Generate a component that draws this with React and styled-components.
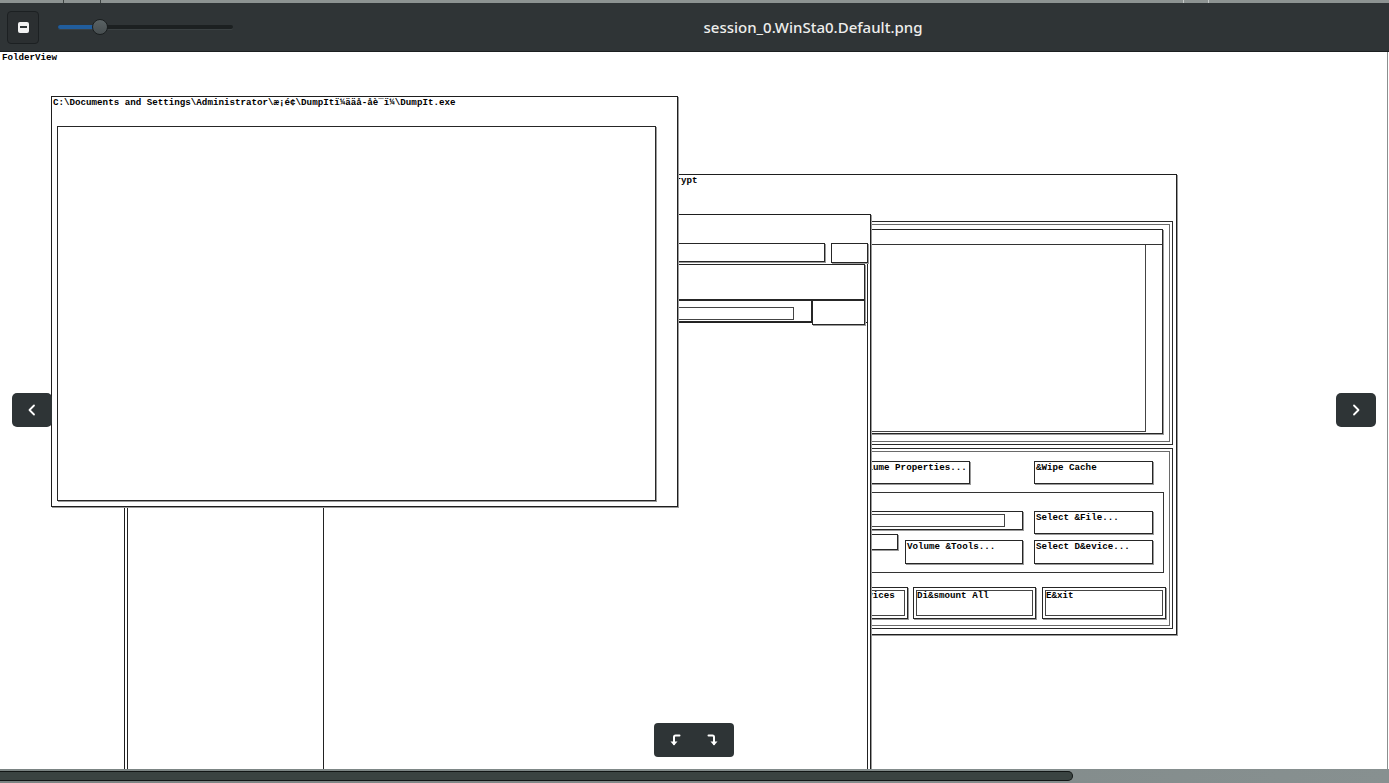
import React from "react";
import styled, { createGlobalStyle, css } from "styled-components";

const GlobalStyle = createGlobalStyle`
  html, body {
    margin: 0;
    padding: 0;
    background: #fff;
    overflow: hidden;
  }
  * { box-sizing: border-box; }
  #root { width: 1389px; height: 783px; }
`;

const mono = css`
  font-family: "Liberation Mono", "DejaVu Sans Mono", monospace;
  font-size: 9.2px;
  font-weight: 700;
  line-height: 10px;
  color: #000;
  white-space: nowrap;
`;

const DUMPIT_PATH =
  "C:\\Documents and Settings\\Administrator\\æ¡é¢\\DumpItï¼ääå-åè¯ï¼\\DumpIt.exe";

const Viewer = styled.div`
  width: 1389px;
  height: 783px;
  display: flex;
  flex-direction: column;
  overflow: hidden;
`;

const TopStrip = styled.div`
  height: 3px;
  flex: none;
  background: linear-gradient(
      to right,
      transparent 63px,
      #3e4443 63px,
      #3e4443 64px,
      transparent 64px,
      transparent 100px,
      #3e4443 100px,
      #3e4443 101px,
      transparent 101px,
      transparent 1183px,
      #c4c8c7 1183px,
      #c4c8c7 1184px,
      transparent 1184px,
      transparent 1208px,
      #c4c8c7 1208px,
      #c4c8c7 1209px,
      transparent 1209px
    ),
    #8d9392;
`;

const HeaderBar = styled.header`
  height: 49px;
  flex: none;
  display: flex;
  align-items: center;
  padding-left: 7px;
  background: #2f3436;
  border-bottom: 1px solid #1b1f20;
`;

const ZoomButton = styled.div`
  width: 32px;
  height: 33px;
  border: 1px solid #1c2022;
  border-radius: 4px;
  background: #2b2f31;
  display: flex;
  align-items: center;
  justify-content: center;
`;

const MinusGlyph = styled.span`
  width: 11px;
  height: 11px;
  border-radius: 2px;
  background: #f2f2f2;
  display: flex;
  align-items: center;
  justify-content: center;
  &::after {
    content: "";
    width: 7px;
    height: 2px;
    background: #2f3436;
  }
`;

const SliderTrack = styled.div`
  position: relative;
  margin-left: 19px;
  width: 175px;
  height: 4px;
  border-radius: 2px;
  background: #1c2021;
  box-shadow: 0 1px 0 #3b4143;
`;

const SliderFill = styled.div`
  height: 100%;
  border-radius: 2px 0 0 2px;
  background: #215d9c;
`;

const SliderKnob = styled.div`
  position: absolute;
  top: -6px;
  width: 16px;
  height: 16px;
  border-radius: 50%;
  border: 1px solid #1a1e1f;
  background: linear-gradient(#5a6264, #474e50);
`;

const Title = styled.div`
  flex: 1;
  text-align: center;
  padding-left: 4px;
  font-family: "Noto Sans", Lato, sans-serif;
  font-weight: 500;
  font-size: 15px;
  color: #eeeeec;
`;

const Stage = styled.main`
  position: relative;
  flex: 1;
  overflow: hidden;
  background: #fff;
`;

const Shot = styled.div`
  position: relative;
  width: 1388px;
  height: 100%;
  border-right: 1px solid #8b8f8e;
  overflow: hidden;
`;

const DesktopLabel = styled.div`
  ${mono};
  padding: 1px 0 0 2px;
`;

const Win = styled.div`
  position: absolute;
  left: ${(p) => p.$x}px;
  top: ${(p) => p.$y}px;
  width: ${(p) => p.$w}px;
  height: ${(p) => p.$h}px;
  z-index: ${(p) => p.$z};
  display: flex;
  flex-direction: column;
  background: #fff;
  border: 1px solid #1e1e1e;
  box-shadow: 1px 1px 0 #9a9a9a;
`;

const WinTitle = styled.div`
  ${mono};
  height: 11px;
  flex: none;
  padding: 1px 0 0 ${(p) => p.$pad || 1}px;
  overflow: hidden;
`;

const Box = styled.div`
  border: 1px solid #262626;
  box-shadow: 1px 1px 0 #9a9a9a;
  background: #fff;
`;

const DoubleFrame = styled.div`
  border: 1px solid #2a2a2a;
  box-shadow: inset 0 0 0 2px #fff, inset 0 0 0 3px #6a6a6a;
`;

/* DumpIt console */
const ConsoleArea = styled(Box)`
  margin: 18px 0 0 5px;
  width: 599px;
  height: 375px;
`;

/* Explorer-like window */
const Client = styled.div`
  flex: 1;
  display: flex;
  flex-direction: column;
  margin: 28px 2px 0 2px;
  border-left: 1px solid #222;
  border-right: 1px solid #222;
`;

const AddrRow = styled.div`
  display: flex;
  align-items: flex-start;
  height: 20px;
`;

const Field = styled(Box)`
  flex: 1;
  height: ${(p) => p.$h}px;
  margin-left: ${(p) => p.$ml || 0}px;
  padding: ${(p) => p.$pt || 0}px ${(p) => p.$pr || 0}px 0 4px;
`;

const InnerField = styled(Box)`
  height: ${(p) => p.$h}px;
  box-shadow: none;
  border-color: #444;
`;

const PlainBtn = styled(Box)`
  flex: none;
  width: ${(p) => p.$w}px;
  height: ${(p) => p.$h}px;
  margin-left: ${(p) => p.$ml || 0}px;
  margin-right: ${(p) => p.$mr || 0}px;
  margin-top: ${(p) => p.$mt || 0}px;
  position: relative;
  z-index: 1;
`;

const Toolbar = styled(Box)`
  height: 36px;
  margin: 1px 2px 0 3px;
`;

const PathRow = styled.div`
  display: flex;
  align-items: flex-start;
  height: 22px;
`;

const Panes = styled.div`
  flex: 1;
  display: flex;
  border-top: 1px solid #222;
`;

const TreePane = styled.div`
  width: 196px;
  border-right: 1px solid #222;
`;

const ListPane = styled.div`
  flex: 1;
`;

/* TrueCrypt dialog */
const VolumeFrame = styled(DoubleFrame)`
  height: 224px;
  margin: 35px 3px 0 3px;
  padding: 7px 9px 10px 9px;
  display: flex;
`;

const ListView = styled(Box)`
  flex: 1;
  display: flex;
  flex-direction: column;
`;

const ListHeader = styled.div`
  height: 15px;
  flex: none;
  border-bottom: 1px solid #333;
`;

const ListBody = styled.div`
  flex: 1;
  display: flex;
`;

const ListItems = styled.div`
  flex: 1;
  border-right: 1px solid #444;
  border-bottom: 1px solid #444;
  margin-bottom: 1px;
`;

const ListScroll = styled.div`
  width: 16px;
`;

const ControlsFrame = styled(DoubleFrame)`
  height: 181px;
  margin: 3px 3px 0 3px;
  padding-top: 12px;
  display: flex;
  flex-direction: column;
`;

const BtnRow = styled.div`
  display: flex;
  justify-content: flex-end;
  align-items: flex-start;
  height: ${(p) => p.$h}px;
  margin-top: ${(p) => p.$mt || 0}px;
  padding-right: ${(p) => p.$pr}px;
`;

const DlgButton = styled(Box)`
  ${mono};
  flex: none;
  width: ${(p) => p.$w}px;
  height: ${(p) => p.$h}px;
  margin-left: ${(p) => p.$ml || 0}px;
  margin-top: ${(p) => p.$mt || 0}px;
  padding: 1px 1px 0;
  overflow: hidden;
  ${(p) =>
    p.$double &&
    css`
      box-shadow: inset 0 0 0 2px #fff, inset 0 0 0 3px #444, 1px 1px 0 #9a9a9a;
      padding: 3px 3px 0;
    `}
`;

const VolumeGroup = styled(Box)`
  height: 81px;
  margin: 8px 8px 0 8px;
  padding: 18px 10px 0 0;
  box-shadow: none;
  border-color: #333;
`;

const GroupRow = styled.div`
  display: flex;
  align-items: flex-start;
  height: ${(p) => p.$h}px;
`;

/* viewer overlays */
const NavButton = styled.div`
  position: absolute;
  top: 341px;
  left: ${(p) => p.$x}px;
  z-index: 10;
  width: 40px;
  height: 34px;
  border-radius: 5px;
  background: #2e3436;
  display: flex;
  align-items: center;
  justify-content: center;
`;

const RotateBar = styled.div`
  position: absolute;
  left: 654px;
  top: 671px;
  z-index: 10;
  width: 80px;
  height: 34px;
  border-radius: 4px;
  background: #2e3436;
  display: flex;
  align-items: center;
  justify-content: space-around;
  padding: 0 4px;
`;

const ScrollTrack = styled.div`
  height: 14px;
  flex: none;
  padding-top: 2px;
  background: linear-gradient(to right, #7a8382, #879090);
`;

const ScrollThumb = styled.div`
  width: 1073px;
  height: 10px;
  border: 1px solid #121615;
  border-left: none;
  border-radius: 0 5px 5px 0;
  background: #3a4341;
`;

const Chevron = ({ dir }) => (
  <svg width="12" height="14" viewBox="0 0 12 14">
    <path
      d={dir === "left" ? "M8 2.5 L3.5 7 L8 11.5" : "M4 2.5 L8.5 7 L4 11.5"}
      fill="none"
      stroke="#fff"
      strokeWidth="1.8"
      strokeLinecap="round"
      strokeLinejoin="round"
    />
  </svg>
);

const RotateIcon = ({ flip }) => (
  <svg
    width="16"
    height="16"
    viewBox="0 0 16 16"
    style={flip ? { transform: "scaleX(-1)" } : undefined}
  >
    <path
      d="M11.5 3.5 H7.5 A1.5 1.5 0 0 0 6 5 V12"
      fill="none"
      stroke="#fff"
      strokeWidth="2"
      strokeLinecap="round"
    />
    <path d="M2.5 9.5 L6 13.5 L9.5 9.5 Z" fill="#fff" />
  </svg>
);

function TrueCryptWindow() {
  return (
    <Win $x={645} $y={122} $w={532} $h={461} $z={1}>
      <WinTitle $pad={2}>TrueCrypt</WinTitle>
      <VolumeFrame>
        <ListView>
          <ListHeader />
          <ListBody>
            <ListItems />
            <ListScroll />
          </ListBody>
        </ListView>
      </VolumeFrame>
      <ControlsFrame>
        <BtnRow $h={23} $pr={19}>
          <DlgButton $w={120} $h={23}>&amp;Create Volume</DlgButton>
          <DlgButton $w={121} $h={23} $ml={64}>
            &amp;Volume Properties...
          </DlgButton>
          <DlgButton $w={119} $h={23} $ml={64}>
            &amp;Wipe Cache
          </DlgButton>
        </BtnRow>
        <VolumeGroup>
          <GroupRow $h={23}>
            <Field $h={19} $ml={60} $pt={2} $pr={17}>
              <InnerField $h={13} />
            </Field>
            <DlgButton $w={119} $h={23} $ml={11}>
              Select &amp;File...
            </DlgButton>
          </GroupRow>
          <GroupRow $h={30}>
            <Field $h={16} $ml={60} />
            <DlgButton $w={118} $h={24} $ml={7} $mt={6}>
              Volume &amp;Tools...
            </DlgButton>
            <DlgButton $w={119} $h={24} $ml={11} $mt={6}>
              Select D&amp;evice...
            </DlgButton>
          </GroupRow>
        </VolumeGroup>
        <BtnRow $h={32} $mt={14} $pr={6}>
          <DlgButton $double $w={121} $h={32}>
            &amp;Mount
          </DlgButton>
          <DlgButton $double $w={122} $h={32} $ml={5}>
            &amp;Auto-Mount Devices
          </DlgButton>
          <DlgButton $double $w={123} $h={32} $ml={5}>
            Di&amp;smount All
          </DlgButton>
          <DlgButton $double $w={124} $h={32} $ml={6}>
            E&amp;xit
          </DlgButton>
        </BtnRow>
      </ControlsFrame>
    </Win>
  );
}

function ExplorerWindow() {
  return (
    <Win $x={124} $y={162} $w={747} $h={620} $z={2}>
      <Client>
        <AddrRow>
          <Field $h={19} $ml={4} />
          <PlainBtn $w={37} $h={20} $ml={6} $mr={-1} />
        </AddrRow>
        <Toolbar />
        <PathRow>
          <Field $h={22} $ml={3} $pt={6} $pr={17}>
            <InnerField $h={13} />
          </Field>
          <PlainBtn $w={53} $h={25} $mr={2} />
        </PathRow>
        <Panes>
          <TreePane />
          <ListPane />
        </Panes>
      </Client>
    </Win>
  );
}

function DumpItWindow() {
  return (
    <Win $x={51} $y={44} $w={627} $h={411} $z={3}>
      <WinTitle>{DUMPIT_PATH}</WinTitle>
      <ConsoleArea />
    </Win>
  );
}

export default function App() {
  return (
    <>
      <GlobalStyle />
      <Viewer>
        <TopStrip />
        <HeaderBar>
          <ZoomButton>
            <MinusGlyph />
          </ZoomButton>
          <SliderTrack>
            <SliderFill style={{ width: "42px" }} />
            <SliderKnob style={{ left: "34px" }} />
          </SliderTrack>
          <Title>session_0.WinSta0.Default.png</Title>
        </HeaderBar>
        <Stage>
          <Shot>
            <DesktopLabel>FolderView</DesktopLabel>
            <TrueCryptWindow />
            <ExplorerWindow />
            <DumpItWindow />
          </Shot>
          <NavButton $x={12}>
            <Chevron dir="left" />
          </NavButton>
          <NavButton $x={1336}>
            <Chevron dir="right" />
          </NavButton>
          <RotateBar>
            <RotateIcon />
            <RotateIcon flip />
          </RotateBar>
        </Stage>
        <ScrollTrack>
          <ScrollThumb />
        </ScrollTrack>
      </Viewer>
    </>
  );
}
